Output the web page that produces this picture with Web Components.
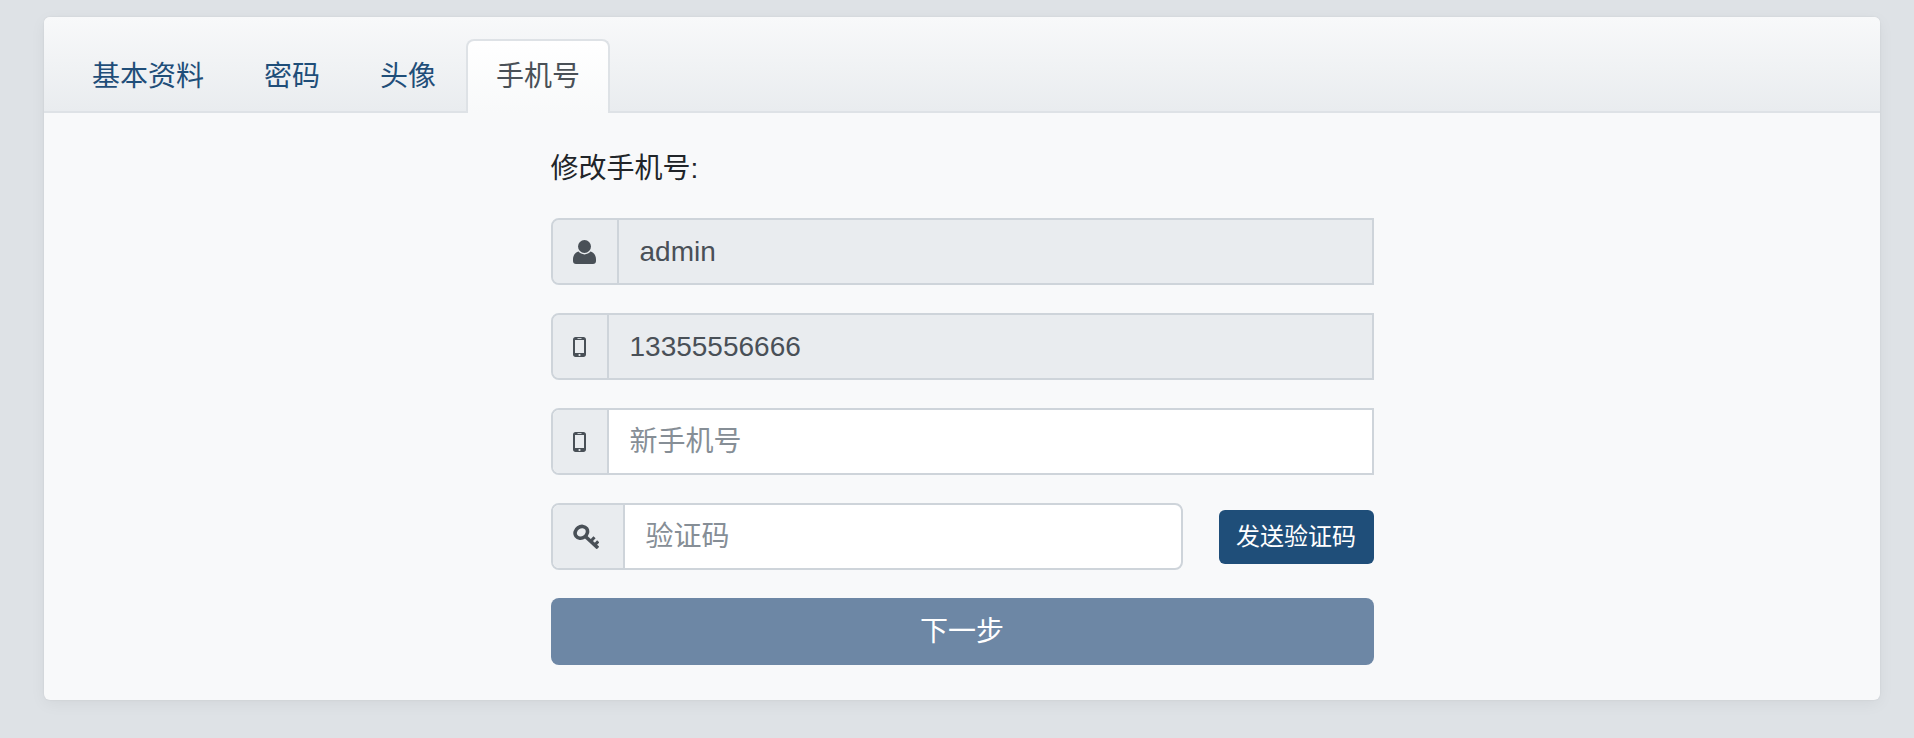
<!DOCTYPE html>
<html lang="zh">
<head>
<meta charset="utf-8">
<title>手机号</title>
<style>
html, body { margin: 0; background: #dee2e6; }
body {
    font-family: "Liberation Sans", "Noto Sans CJK SC", sans-serif;
    font-size: 28px;
    line-height: 42px;
    color: #212529;
}
</style>
</head>
<body>
<settings-page>
    <profile-card>
        <tab-item slot="tabs">基本资料</tab-item>
        <tab-item slot="tabs">密码</tab-item>
        <tab-item slot="tabs">头像</tab-item>
        <tab-item slot="tabs" active>手机号</tab-item>

        <phone-form heading="修改手机号:">
            <icon-field icon="user" square disabled>admin</icon-field>
            <icon-field icon="mobile" square disabled>13355556666</icon-field>
            <icon-field icon="mobile" square placeholder>新手机号</icon-field>
            <code-row>
                <icon-field icon="key" placeholder>验证码</icon-field>
                <app-button slot="action" size="small">发送验证码</app-button>
            </code-row>
            <app-button block muted>下一步</app-button>
        </phone-form>
    </profile-card>
</settings-page>

<script>
class SettingsPage extends HTMLElement {
    constructor() {
        super();
        this.attachShadow({ mode: 'open' });
        this.shadowRoot.innerHTML = `
<style>
:host { display: block; padding: 17px 34px 38px 44px; }
</style>
<slot></slot>`;
    }
}

class ProfileCard extends HTMLElement {
    constructor() {
        super();
        this.attachShadow({ mode: 'open' });
        this.shadowRoot.innerHTML = `
<style>
:host {
    display: block;
    background: #f8f9fa;
    border-radius: 6px;
    box-shadow: 0 4px 16px rgba(0,0,0,.05), 0 0 2px rgba(0,0,0,.08);
}
.head {
    display: flex;
    align-items: flex-end;
    height: 96px;
    box-sizing: border-box;
    padding: 0 18px;
    border-bottom: 2px solid #dee2e6;
    border-radius: 6px 6px 0 0;
    background: linear-gradient(#f8f9fa, #e9ecef);
}
.body { padding: 35px 0 35px; }
</style>
<div class="head"><slot name="tabs"></slot></div>
<div class="body"><slot></slot></div>`;
    }
}

class TabItem extends HTMLElement {
    constructor() {
        super();
        this.attachShadow({ mode: 'open' });
        this.shadowRoot.innerHTML = `
<style>
:host {
    display: block;
    box-sizing: border-box;
    height: 74px;
    margin-bottom: -2px;
    padding: 15px 30px 0;
    color: #1f4e79;
    border: 2px solid transparent;
    border-width: 2px 0 0;
    cursor: pointer;
}
:host([active]) {
    padding: 15px 28px 0;
    color: #495057;
    border: 2px solid #dee2e6;
    border-bottom: 0;
    border-radius: 8px 8px 0 0;
    background: linear-gradient(#fff, #f8f9fa);
}
</style>
<slot></slot>`;
    }
}

class PhoneForm extends HTMLElement {
    constructor() {
        super();
        this.attachShadow({ mode: 'open' });
        this.shadowRoot.innerHTML = `
<style>
:host { display: block; width: 823px; margin: 0 auto; }
.title { margin-bottom: 28px; }
.rows { display: flex; flex-direction: column; gap: 28px; }
</style>
<div class="title"></div>
<div class="rows"><slot></slot></div>`;
    }
    connectedCallback() {
        this.shadowRoot.querySelector('.title').textContent = this.getAttribute('heading');
    }
}

const ICONS = {
    user: `<svg width="23" height="24" viewBox="0 0 23 24"><circle cx="11.5" cy="6.5" r="6.5" fill="#495057"/><path fill="#495057" d="M0 19.5C0 15 2.6 12.2 5.6 11.6 7 13.4 9 14.4 11.5 14.4S16 13.4 17.4 11.600C20.400 12.200 23 15 23 19.500V21C23 22.800 21.800 24 20 24H3C1.200 24 0 22.800 0 21Z"/></svg>`,
    mobile: `<svg width="13" height="20" viewBox="0 0 13 20"><path fill="#495057" fill-rule="evenodd" d="M2.500 0H10.500C11.900 0 13 1.100 13 2.500V17.500C13 18.900 11.900 20 10.500 20H2.500C1.100 20 0 18.900 0 17.500V2.500C0 1.100 1.100 0 2.500 0ZM2 3V16H11V3Z"/><rect x="4.500" y="1.200" width="4" height="0.800" fill="#e9ecef"/><circle cx="6.500" cy="18" r="1.100" fill="#e9ecef"/></svg>`,
    key: `<svg width="26" height="25" viewBox="0 0 26 25"><g fill="none" stroke="#495057"><ellipse cx="8.300" cy="8.300" rx="6.500" ry="5.600" transform="rotate(-35 8.300 8.300)" stroke-width="3.600"/><path d="M13 13L25 24" stroke-width="3.600"/><path d="M18 17L21.500 13.200M22 20.800L25.200 17.300" stroke-width="3"/></g></svg>`
};

class IconField extends HTMLElement {
    constructor() {
        super();
        this.attachShadow({ mode: 'open' });
        this.shadowRoot.innerHTML = `
<style>
:host {
    display: flex;
    box-sizing: border-box;
    height: 67px;
    border: 2px solid #ced4da;
    border-radius: 8px;
    background: #fff;
    color: #495057;
}
:host([square]) { border-radius: 8px 0 0 8px; }
:host([disabled]) { background: #e9ecef; }
:host([placeholder]) { color: #868e96; }
:host([icon="key"]) .addon { padding-right: 24px; }
.addon {
    display: flex;
    align-items: center;
    padding: 0 21px 0 20px;
    border-right: 2px solid #ced4da;
    border-radius: 6px 0 0 6px;
    background: #e9ecef;
}
svg { display: block; }
.text { display: flex; align-items: center; padding: 0 21px; }
</style>
<span class="addon"></span>
<span class="text"><slot></slot></span>`;
    }
    connectedCallback() {
        this.shadowRoot.querySelector('.addon').innerHTML = ICONS[this.getAttribute('icon')];
    }
}

class CodeRow extends HTMLElement {
    constructor() {
        super();
        this.attachShadow({ mode: 'open' });
        this.shadowRoot.innerHTML = `
<style>
:host { display: flex; align-items: center; gap: 36px; }
::slotted(icon-field) { flex: 1; }
</style>
<slot></slot>
<slot name="action"></slot>`;
    }
}

class AppButton extends HTMLElement {
    constructor() {
        super();
        this.attachShadow({ mode: 'open' });
        this.shadowRoot.innerHTML = `
<style>
:host {
    display: flex;
    align-items: center;
    justify-content: center;
    box-sizing: border-box;
    height: 67px;
    border-radius: 8px;
    background: #1f4e79;
    color: #fff;
    cursor: pointer;
}
:host([muted]) { background: #6d87a5; cursor: default; }
:host([size="small"]) {
    width: 155px;
    height: 54px;
    border-radius: 6px;
    font-size: 24px;
}
</style>
<slot></slot>`;
    }
}

customElements.define('settings-page', SettingsPage);
customElements.define('profile-card', ProfileCard);
customElements.define('tab-item', TabItem);
customElements.define('phone-form', PhoneForm);
customElements.define('icon-field', IconField);
customElements.define('code-row', CodeRow);
customElements.define('app-button', AppButton);
</script>
</body>
</html>
